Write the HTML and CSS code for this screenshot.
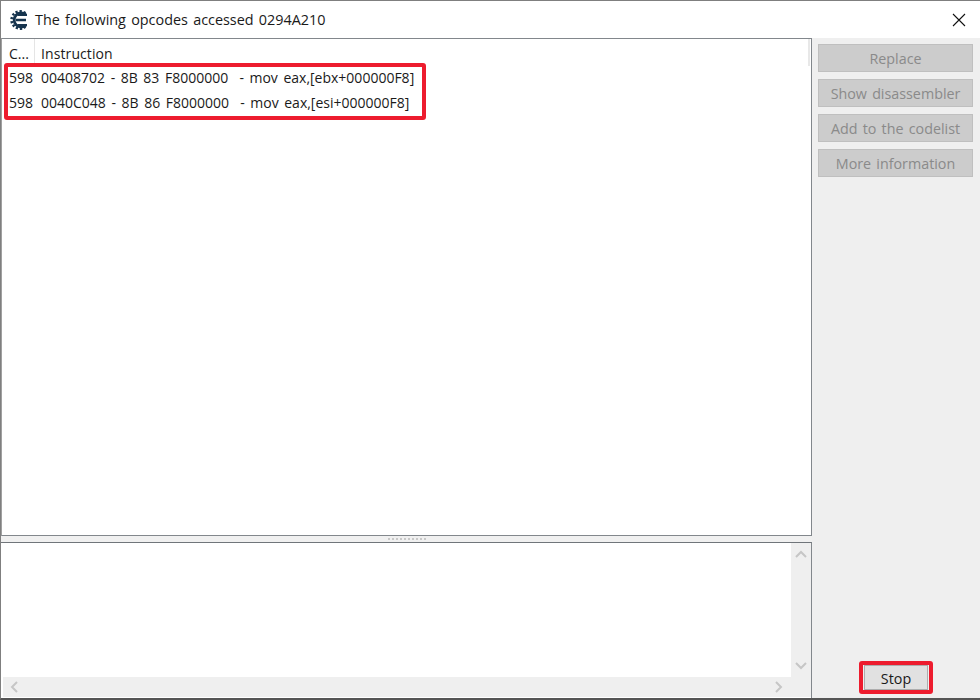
FILE: index.html
```html
<!DOCTYPE html>
<html lang="en">
<head>
<meta charset="utf-8">
<title>The following opcodes accessed 0294A210</title>
<link rel="stylesheet" href="styles.css">
</head>
<body>
<div class="window">
  <header class="titlebar">
    <svg class="app-icon" width="20" height="20" viewBox="0 0 20 20">
      <path d="M15.6 4.6A7 7 0 1 0 15.6 15.4" fill="none" stroke="#16344e" stroke-width="2.8"/>
      <path d="M15.4 3.2A8.6 8.6 0 1 0 15.4 16.8" fill="none" stroke="#16344e" stroke-width="2.6" stroke-dasharray="2.2 1.8"/>
      <path d="M8 4.8H17M5.8 10H16M8 15.2H17" fill="none" stroke="#16344e" stroke-width="2.3"/>
    </svg>
    <span class="title">The following opcodes accessed 0294A210</span>
    <svg class="close" width="14" height="14" viewBox="0 0 14 14"><path d="M1 1L13 13M13 1L1 13" stroke="#111" stroke-width="1.1"/></svg>
  </header>
  <div class="body">
    <div class="left">
      <section class="list">
        <div class="list-head">
          <div class="col-count">C...</div>
          <div class="col-instr">Instruction</div>
          <div class="col-end"></div>
        </div>
        <div class="row"><span class="col-count">598</span><span class="col-instr">00408702 - 8B 83 F8000000&nbsp; - mov eax,[ebx+000000F8]</span></div>
        <div class="row"><span class="col-count">598</span><span class="col-instr">0040C048 - 8B 86 F8000000&nbsp; - mov eax,[esi+000000F8]</span></div>
        <div class="mark mark-rows"></div>
      </section>
      <div class="splitter"><span class="grip"></span></div>
      <section class="memo">
        <div class="memo-main">
          <div class="memo-text"></div>
          <div class="vscroll">
            <svg width="14" height="10" viewBox="0 0 14 10"><path d="M2 8L7 3L12 8" fill="none" stroke="#c6c6c6" stroke-width="2"/></svg>
            <svg width="14" height="10" viewBox="0 0 14 10"><path d="M2 2L7 7L12 2" fill="none" stroke="#c6c6c6" stroke-width="2"/></svg>
          </div>
        </div>
        <div class="hscroll">
          <svg width="10" height="14" viewBox="0 0 10 14"><path d="M8 2L3 7L8 12" fill="none" stroke="#c6c6c6" stroke-width="2"/></svg>
          <svg width="10" height="14" viewBox="0 0 10 14"><path d="M2 2L7 7L2 12" fill="none" stroke="#c6c6c6" stroke-width="2"/></svg>
        </div>
      </section>
    </div>
    <aside class="side">
      <button class="btn" disabled>Replace</button>
      <button class="btn" disabled>Show disassembler</button>
      <button class="btn" disabled>Add to the codelist</button>
      <button class="btn" disabled>More information</button>
      <div class="stop-wrap">
        <button class="btn stop">Stop</button>
        <div class="mark mark-stop"></div>
      </div>
    </aside>
  </div>
</div>
</body>
</html>
```
FILE: styles.css
```css
* { box-sizing: border-box; }
html, body { margin: 0; padding: 0; }
body { width: 980px; height: 700px; overflow: hidden; background: #fff; font-family: "Open Sans", "Noto Sans", sans-serif; font-size: 14px; color: #1a1a1a; }
.window { width: 980px; height: 700px; display: flex; flex-direction: column; border-left: 1px solid #7f7f7f; border-top: 1px solid #7f7f7f; border-bottom: 2px solid #555; }
.titlebar { height: 37px; flex: none; background: #fff; display: flex; align-items: center; padding: 0 14px 0 9px; }
.app-icon { flex: none; margin-right: 5px; }
.title { flex: 1; white-space: nowrap; font-size: 14.4px; word-spacing: 1.5px; }
.close { flex: none; }
.body { flex: 1; display: flex; background: #efefef; min-height: 0; }
.left { width: 811px; flex: none; display: flex; flex-direction: column; }
.list { position: relative; height: 498px; flex: none; background: #fff; border: 1px solid #82878c; border-left-color: #a0a0a0; }
.list-head { display: flex; height: 26px; align-items: flex-start; }
.col-count { width: 33px; flex: none; padding-left: 7px; white-space: nowrap; }
.col-instr { padding-left: 6px; white-space: pre; word-spacing: 1.95px; }
.list-head .col-count { height: 25px; line-height: 30px; border-right: 1px solid #e5e5e5; }
.list-head .col-instr { flex: 1; line-height: 30px; letter-spacing: 0.1px; }
.col-end { width: 2px; height: 27px; margin-right: 1px; flex: none; background: #e8e8e8; }
.row { display: flex; height: 25px; line-height: 25px; }
.mark { position: absolute; border: 4px solid #ed1c2e; border-radius: 3px; pointer-events: none; }
.mark-rows { left: 2px; top: 24px; width: 422px; height: 57px; }
.splitter { height: 6px; flex: none; position: relative; background: #f0f0f0; }
.grip { position: absolute; left: 387px; top: 2px; width: 38px; height: 2px; background: repeating-linear-gradient(90deg, #c8c8c8 0 2px, transparent 2px 4px); }
.memo { flex: 1; display: flex; flex-direction: column; background: #fff; border-top: 1px solid #70757a; border-right: 1px solid #82878c; min-height: 0; }
.memo-main { flex: 1; display: flex; min-height: 0; }
.memo-text { flex: 1; background: #fff; }
.vscroll { width: 20px; flex: none; background: #efefef; display: flex; flex-direction: column; justify-content: space-between; align-items: center; padding: 6px 0 6px; }
.hscroll { height: 20px; flex: none; margin: 0 0 1px 2px; background: #efefef; display: flex; justify-content: space-between; align-items: center; padding: 0 27px 0 6px; }
.side { flex: 1; display: flex; flex-direction: column; gap: 7px; padding: 6px 7px 8px 6px; position: relative; }
.btn { height: 28px; width: 155px; flex: none; padding: 0; font: inherit; font-size: 14.3px; word-spacing: 1.5px; background: #cccccc; border: 1px solid #bfbfbf; color: #8a8a8a; }
.stop-wrap { margin-top: auto; align-self: flex-start; position: relative; margin-left: 46px; }
.stop { width: 64px; background: #e1e1e1; border-color: #adadad; color: #1a1a1a; height: 25px; display: block; padding-top: 2px; }
.mark-stop { left: -5px; top: -4px; width: 74px; height: 33px; }
```
